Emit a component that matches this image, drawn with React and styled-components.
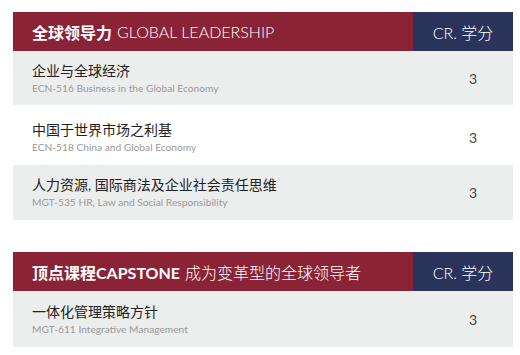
import React from 'react'
import styled, { createGlobalStyle } from 'styled-components'

const GlobalStyle = createGlobalStyle`
	body {
		margin: 0;
		background: #fff;
		font-family: Lato, "Noto Sans CJK SC", sans-serif;
	}
`

const Page = styled.div`
	width: 520px;
	padding: 12px 7px 0 13px;
	box-sizing: border-box;
	display: flex;
	flex-direction: column;
	gap: 32px;
`

const Section = styled.section`
	display: flex;
	flex-direction: column;
`

const Header = styled.div`
	display: grid;
	grid-template-columns: 1fr 100px;
	height: 39px;
	color: #fff;
	font-size: 16px;
`

const HeaderTitle = styled.div`
	background: #8a2336;
	display: flex;
	align-items: center;
	padding-left: 19px;
	white-space: nowrap;
`

const Strong = styled.b`
	font-weight: 700;
`

const Light = styled.span`
	font-weight: 300;
	margin-left: 5px;
`

const HeaderCredit = styled.div`
	background: #2a345b;
	display: flex;
	align-items: center;
	justify-content: center;
	font-weight: 300;
`

const Row = styled.div`
	display: grid;
	grid-template-columns: 1fr 100px;
	height: ${p => p.$h}px;
	background: ${p => (p.$shaded ? '#eceded' : '#fff')};
`

const Course = styled.div`
	display: flex;
	flex-direction: column;
	justify-content: center;
	padding-left: 19px;
	padding-top: ${p => p.$shift || 0}px;
`

const Name = styled.span`
	font-size: 14px;
	color: #222;
	line-height: 18px;
`

const Code = styled.span`
	font-size: 10.2px;
	color: #9a9a9a;
	line-height: 14px;
	margin-top: 1px;
`

const Credit = styled.div`
	display: flex;
	align-items: center;
	justify-content: center;
	padding-left: 20px;
	font-size: 14px;
	color: #444;
	padding-top: ${p => p.$shift || 0}px;
`

const sections = [
	{
		strong: '全球领导力',
		rest: 'GLOBAL LEADERSHIP',
		rows: [
			{ name: '企业与全球经济', code: 'ECN-516 Business in the Global Economy', h: 54, shaded: true },
			{ name: '中国于世界市场之利基', code: 'ECN-518 China and Global Economy', h: 60, shift: 4 },
			{ name: '人力资源, 国际商法及企业社会责任思维', code: 'MGT-535 HR, Law and Social Responsibility', h: 55, shaded: true },
		],
	},
	{
		strong: '顶点课程CAPSTONE',
		rest: '成为变革型的全球领导者',
		rows: [
			{ name: '一体化管理策略方针', code: 'MGT-611 Integrative Management', h: 56, shaded: true },
		],
	},
]

export default function App() {
	return (
		<>
			<GlobalStyle />
			<Page>
				{sections.map(sec => (
					<Section key={sec.strong}>
						<Header>
							<HeaderTitle>
								<Strong>{sec.strong}</Strong>
								<Light>{sec.rest}</Light>
							</HeaderTitle>
							<HeaderCredit>CR. 学分</HeaderCredit>
						</Header>
						{sec.rows.map(row => (
							<Row key={row.code} $h={row.h} $shaded={row.shaded}>
								<Course $shift={row.shift}>
									<Name>{row.name}</Name>
									<Code>{row.code}</Code>
								</Course>
								<Credit $shift={row.shift}>3</Credit>
							</Row>
						))}
					</Section>
				))}
			</Page>
		</>
	)
}
